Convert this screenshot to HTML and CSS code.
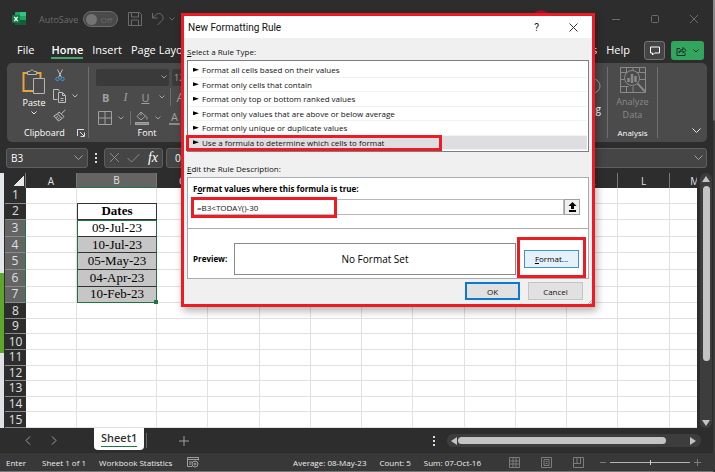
FILE: index.html
```
<!DOCTYPE html>
<html lang="en">

<head>
    <meta charset="UTF-8">
    <meta name="viewport" content="width=device-width, initial-scale=1.0">
    <title>New Formatting Rule</title>
    <link rel="stylesheet" href="styles.css">
</head>

<body>

    <div class="window">
        <header class="titlebar">
            <svg class="logo" width="14" height="14" viewBox="0 0 14 14">
                <g stroke="none">
                    <rect x="3" y="0" width="11" height="13" rx="1" fill="#21a366"/>
                    <rect x="8" y="0" width="6" height="4" fill="#33c481"/>
                    <rect x="3" y="8" width="11" height="5" rx="1" fill="#185c37"/>
                    <rect x="0" y="3" width="8" height="8" rx="1" fill="#107c41"/>
                </g>
                <path d="M2.3 4.8l3.4 4.4M5.7 4.8L2.3 9.2" stroke="#fff" stroke-width="1.3"/>
            </svg>
            <label class="autosave">AutoSave
                <span class="toggle"><input type="checkbox"><span>Off</span></span>
            </label>
            <button class="icon-btn save" aria-label="Save">
                <svg width="14" height="14" viewBox="0 0 14 14"><path d="M.5.5h11l2 2v11H.5zM3.5.5v4.5h7V.5M3.5 13.5V8h7v5.5"/></svg>
            </button>
            <button class="icon-btn undo" aria-label="Undo">
                <svg width="14" height="14" viewBox="0 0 14 14"><path d="M1.500 1v5h5M1.500 6l3-3c2-2 5-2 6.500 0s1.500 4 0 5.500L6.500 13"/></svg>
            </button>
            <svg width="6" height="4" viewBox="0 0 6 4"><path d="M.5.5L3 3 5.500.5"/></svg>
            <span class="avatar"></span>
            <div class="caption">
                <button class="icon-btn" aria-label="Minimize"><svg width="10" height="10" viewBox="0 0 10 10"><path d="M1 5.500h8"/></svg></button>
                <button class="icon-btn" aria-label="Maximize"><svg width="10" height="10" viewBox="0 0 10 10"><rect x="1.500" y="1.500" width="7" height="7" rx="1"/></svg></button>
                <button class="icon-btn" aria-label="Close"><svg width="10" height="10" viewBox="0 0 10 10"><path d="M1 1l8 8M9 1L1 9"/></svg></button>
            </div>
        </header>

        <nav class="tabs">
            <a href="#">File</a>
            <a href="#" class="active">Home</a>
            <a href="#">Insert</a>
            <a href="#">Page Layout</a>
            <a href="#" class="push">Add-ins</a>
            <a href="#">Help</a>
            <button class="comment" aria-label="Comments">
                <svg width="10" height="10" viewBox="0 0 10 10"><path d="M.5 1h9v6H4.500L2.500 9V7h-2z"/></svg>
            </button>
            <button class="share" aria-label="Share">
                <svg width="11" height="10" viewBox="0 0 11 10"><path d="M4 2.500H1v7h8V7M3 7c0-2.500 1.500-3.500 4-3.500V1.500l3 3-3 2.500V5C5 5 4 5.500 3 7z"/></svg>
                <svg width="6" height="4" viewBox="0 0 6 4"><path d="M.5.5L3 3 5.500.5"/></svg>
            </button>
        </nav>

        <section class="ribbon">
            <div class="group clipboard">
                <div class="group-body">
                    <button class="paste">
                        <svg width="24" height="26" viewBox="0 0 24 26">
                            <path d="M5 4H1.500v18H11M15 4h3.500v5" stroke="#e8a33d" stroke-width="2"/>
                            <path d="M5.500 5.500v-3h2.500c0-2 4-2 4 0h2.500v3zM11.500 9.500h11v15h-11z" fill="#4b4b4b" stroke="#b5b5b5"/>
                        </svg>
                        Paste
                        <svg class="light" width="6" height="4" viewBox="0 0 6 4"><path d="M.5.5L3 3 5.500.5"/></svg>
                    </button>
                    <div class="clip-tools">
                        <svg width="14" height="13" viewBox="0 0 14 13"><path d="M4.500.5l4 8M9.500.5l-4 8"/><circle cx="4.500" cy="10" r="1.700" stroke="#3d9be0"/><circle cx="9.500" cy="10" r="1.700" stroke="#3d9be0"/></svg>
                        <span class="copy">
                            <svg width="14" height="14" viewBox="0 0 14 14"><path d="M4.500 10.500h-4V.5h5l1 2M5.500 3.500h4l3 3v7h-7zM9.500 3.500v3h3M7.500 9.500h3M7.500 11.500h3"/></svg>
                            <svg class="light" width="6" height="4" viewBox="0 0 6 4"><path d="M.5.5L3 3 5.500.5"/></svg>
                        </span>
                        <svg width="14" height="13" viewBox="0 0 14 13"><path d="M12.500.8L8.500 4.500M6 3l5 4.500M6 3L4.500 5 9 9.500l2-2M4.500 5L.8 7l4.700 5L9 9.500M3 8.500l2-1M4.500 10.500l2-1.500"/></svg>
                    </div>
                </div>
                <div class="group-name">Clipboard
                    <svg class="launcher" width="8" height="8" viewBox="0 0 8 8"><path d="M.5 7V.5H7M3 3l4 4M7.500 3.500v4h-4"/></svg>
                </div>
            </div>
            <div class="group font">
                <div class="font-row">
                    <button class="combo" aria-label="Font"><svg width="6" height="4" viewBox="0 0 6 4"><path d="M.5.5L3 3 5.500.5"/></svg></button>
                    <button class="combo size" aria-label="Font size">12</button>
                </div>
                <div class="font-row styles">
                    <b>B</b><i>I</i><u>U</u>
                    <svg width="6" height="4" viewBox="0 0 6 4"><path d="M.5.5L3 3 5.500.5"/></svg>
                    <span class="grow">A</span>
                </div>
                <div class="font-row fills">
                    <svg width="14" height="14" viewBox="0 0 14 14"><path d="M.5.5h13v13H.5zM7 .5v13M.5 7h13"/></svg>
                    <svg width="6" height="4" viewBox="0 0 6 4"><path d="M.5.5L3 3 5.500.5"/></svg>
                    <span class="bucket">
                        <svg width="14" height="14" viewBox="0 0 14 14"><path d="M6 1L2 5.500l4 3.500 4.500-4zM6 1V4.500M10.500 5c1.500.5 1.500 1.500 1.500 3.500"/><rect x=".5" y="11.500" width="13" height="2" fill="#8a8a8a"/></svg>
                    </span>
                    <svg width="6" height="4" viewBox="0 0 6 4"><path d="M.5.5L3 3 5.500.5"/></svg>
                    <span class="fontcolor">A</span>
                </div>
                <div class="group-name">Font</div>
            </div>
            <div class="group editing">
                <svg width="16" height="16" viewBox="0 0 16 16"><circle cx="8" cy="8" r="7"/></svg>
                <span>Editing</span>
            </div>
            <div class="group analysis">
                <button class="analyze">
                    <svg width="26" height="26" viewBox="0 0 26 26">
                        <path d="M.5.5h25v25H.5zM.5 5.500h25M.5 12.500h6M.5 19.500h8M6.500.5v5M13 .5v4M19.500.5v5M19.500 12.500h6M6.500 19.500v6M13 19.500v6"/>
                        <circle cx="12" cy="11" r="7.500" fill="#4b4b4b"/>
                        <path d="M8.500 15v-4M12 16V7M15.500 15V9" stroke-width="2.500"/>
                        <path d="M17.500 16.500l7.500 8" stroke-width="2"/>
                    </svg>
                    Analyze<br>Data
                </button>
                <div class="group-name">Analysis</div>
            </div>
            <div class="group collapse">
                <svg class="light" width="9" height="5" viewBox="0 0 9 5"><path d="M.5.5l4 4 4-4"/></svg>
            </div>
        </section>

        <div class="formula-bar">
            <button class="namebox">B3 <svg width="9" height="5" viewBox="0 0 9 5"><path d="M.5.5l4 4 4-4"/></svg></button>
            <span class="dots"></span>
            <div class="fx-box">
                <svg width="11" height="11" viewBox="0 0 11 11"><path d="M1 1l9 9M10 1l-9 9"/></svg>
                <svg width="13" height="10" viewBox="0 0 13 10"><path d="M.5 5l4 4 8-8"/></svg>
                <i>fx</i>
            </div>
            <div class="formula">09-07-2023 <svg width="9" height="5" viewBox="0 0 9 5"><path d="M.5.5l4 4 4-4"/></svg></div>
        </div>

        <main class="sheet">
            <div class="edge"></div>
            <div class="grid-wrap">
                <table class="grid">
                    <thead>
                        <tr><th class="corner"></th><th class="col-a">A</th><th class="col-b sel">B</th><th>C</th><th>D</th><th>E</th><th>F</th><th>G</th><th>H</th><th>I</th><th>J</th><th>K</th><th>L</th><th>M</th></tr>
                    </thead>
                    <tbody>
                        <tr><th>1</th><td></td><td></td><td></td><td></td><td></td><td></td><td></td><td></td><td></td><td></td><td></td><td></td><td></td></tr>
                        <tr class="data"><th>2</th><td></td><td class="title">Dates</td><td></td><td></td><td></td><td></td><td></td><td></td><td></td><td></td><td></td><td></td><td></td></tr>
                        <tr class="data sel first"><th>3</th><td></td><td>09-Jul-23</td><td></td><td></td><td></td><td></td><td></td><td></td><td></td><td></td><td></td><td></td><td></td></tr>
                        <tr class="data sel"><th>4</th><td></td><td>10-Jul-23</td><td></td><td></td><td></td><td></td><td></td><td></td><td></td><td></td><td></td><td></td><td></td></tr>
                        <tr class="data sel"><th>5</th><td></td><td>05-May-23</td><td></td><td></td><td></td><td></td><td></td><td></td><td></td><td></td><td></td><td></td><td></td></tr>
                        <tr class="data sel"><th>6</th><td></td><td>04-Apr-23</td><td></td><td></td><td></td><td></td><td></td><td></td><td></td><td></td><td></td><td></td><td></td></tr>
                        <tr class="data sel last"><th>7</th><td></td><td>10-Feb-23</td><td></td><td></td><td></td><td></td><td></td><td></td><td></td><td></td><td></td><td></td><td></td></tr>
                        <tr><th>8</th><td></td><td></td><td></td><td></td><td></td><td></td><td></td><td></td><td></td><td></td><td></td><td></td><td></td></tr>
                        <tr><th>9</th><td></td><td></td><td></td><td></td><td></td><td></td><td></td><td></td><td></td><td></td><td></td><td></td><td></td></tr>
                        <tr><th>10</th><td></td><td></td><td></td><td></td><td></td><td></td><td></td><td></td><td></td><td></td><td></td><td></td><td></td></tr>
                        <tr><th>11</th><td></td><td></td><td></td><td></td><td></td><td></td><td></td><td></td><td></td><td></td><td></td><td></td><td></td></tr>
                        <tr><th>12</th><td></td><td></td><td></td><td></td><td></td><td></td><td></td><td></td><td></td><td></td><td></td><td></td><td></td></tr>
                        <tr><th>13</th><td></td><td></td><td></td><td></td><td></td><td></td><td></td><td></td><td></td><td></td><td></td><td></td><td></td></tr>
                        <tr><th>14</th><td></td><td></td><td></td><td></td><td></td><td></td><td></td><td></td><td></td><td></td><td></td><td></td><td></td></tr>
                        <tr><th>15</th><td></td><td></td><td></td><td></td><td></td><td></td><td></td><td></td><td></td><td></td><td></td><td></td><td></td></tr>
                    </tbody>
                </table>
            </div>
            <div class="vscroll">
                <svg width="8" height="6" viewBox="0 0 8 6"><path class="solid" d="M4 0l4 6H0z"/></svg>
                <span class="vthumb"></span>
                <svg class="down" width="8" height="6" viewBox="0 0 8 6"><path class="solid" d="M0 0h8L4 6z"/></svg>
            </div>
        </main>

        <div class="sheet-tabs">
            <svg width="6" height="9" viewBox="0 0 6 9"><path d="M5 .5l-4 4 4 4"/></svg>
            <svg width="6" height="9" viewBox="0 0 6 9"><path d="M1 .5l4 4-4 4"/></svg>
            <a href="#" class="sheet-tab"><span>Sheet1</span></a>
            <button class="add" aria-label="New sheet"><svg width="10" height="10" viewBox="0 0 10 10"><path d="M5 0v10M0 5h10"/></svg></button>
            <span class="dots"></span>
            <div class="hscroll">
                <svg width="6" height="8" viewBox="0 0 6 8"><path class="solid" d="M6 0v8L0 4z"/></svg>
                <span class="hthumb"></span>
                <svg width="6" height="8" viewBox="0 0 6 8"><path class="solid" d="M0 0l6 4-6 4z"/></svg>
            </div>
        </div>

        <footer class="status">
            <span class="mode">Enter</span>
            <span class="count">Sheet 1 of 1</span>
            <span>Workbook Statistics</span>
            <svg class="macro" width="12" height="11" viewBox="0 0 12 11"><path d="M.5.5h11v3M.5.5v9H5M.5 2.500h11M2 5h3M2 7h2"/><circle cx="8" cy="7" r="3"/><circle cx="8" cy="7" r="1"/></svg>
            <div class="totals"><span>Average: 08-May-23</span><span>Count: 5</span><span>Sum: 07-Oct-16</span></div>
            <div class="views">
                <svg width="11" height="11" viewBox="0 0 11 11"><path d="M.5.5h10v10H.5zM.5 4h10M.5 7h10M4 .5v10M7 .5v10"/></svg>
                <svg width="11" height="11" viewBox="0 0 11 11"><path d="M.5.5h10v10H.5zM3 2.500h5v6H3zM4.500 4.500h2M4.500 6.500h2"/></svg>
                <svg width="11" height="11" viewBox="0 0 11 11"><path d="M.5.5h10v10H.5zM4 .5v6M7.500.5v6M.5 6.500h7"/></svg>
            </div>
            <div class="zoom">
                <svg width="6" height="7" viewBox="0 0 6 7"><path d="M0 3.500h6"/></svg>
                <input type="range" aria-label="Zoom" value="50">
                <svg width="7" height="7" viewBox="0 0 7 7"><path d="M0 3.500h7M3.500 0v7"/></svg>
            </div>
        </footer>

        <div class="dialog" role="dialog" aria-labelledby="dialog-title">
            <div class="dialog-head">
                <span id="dialog-title">New Formatting Rule</span>
                <button aria-label="Help">?</button>
                <button aria-label="Close"><svg width="9" height="9" viewBox="0 0 9 9"><path d="M.5.5l8 8M8.500.5l-8 8"/></svg></button>
            </div>
            <div class="dialog-body">
                <div class="caption-text" id="rule-type"><u>S</u>elect a Rule Type:</div>
                <ul class="rules" role="listbox" aria-labelledby="rule-type">
                    <li role="option">Format all cells based on their values</li>
                    <li role="option">Format only cells that contain</li>
                    <li role="option">Format only top or bottom ranked values</li>
                    <li role="option">Format only values that are above or below average</li>
                    <li role="option">Format only unique or duplicate values</li>
                    <li role="option" class="picked" aria-selected="true">Use a formula to determine which cells to format</li>
                </ul>
                <div class="caption-text"><u>E</u>dit the Rule Description:</div>
                <div class="description">
                    <div class="formula-part">
                        <label for="rule-formula">F<u>o</u>rmat values where this formula is true:</label>
                        <div class="formula-row">
                            <input type="text" id="rule-formula" value="=B3&lt;TODAY()-30">
                            <button aria-label="Collapse"><svg width="9" height="10" viewBox="0 0 9 10"><path class="arrow" d="M4.500 0l4 4H6v3H3V4H.5zM1 8h7v2H1z"/></svg></button>
                        </div>
                    </div>
                    <div class="preview-part">
                        <b>Preview:</b>
                        <div class="preview">No Format Set</div>
                        <button class="btn hot"><span><u>F</u>ormat...</span></button>
                    </div>
                </div>
                <div class="actions">
                    <button class="btn ok">OK</button>
                    <button class="btn">Cancel</button>
                </div>
            </div>
        </div>
    </div>

    <script>
        // put the caret at the end of the formula
        const formula = document.getElementById("rule-formula");
        formula.focus();
        formula.setSelectionRange(formula.value.length, formula.value.length);
    </script>

</body>

</html>
```
FILE: styles.css
```
* {
    box-sizing: border-box;
}

body {
    margin: 0;
    font-family: "Open Sans", "Noto Sans", sans-serif;
    font-size: 11px;
    color: #fff;
    background: linear-gradient(#8c8c8c, #6a6a6a 120px, #3a3a3a 121px);
}

button, input {
    font: inherit;
    color: inherit;
    margin: 0;
    padding: 0;
    border: 0;
    background: none;
}

button {
    display: flex;
    align-items: center;
    justify-content: center;
}

a {
    color: inherit;
    text-decoration: none;
}

svg {
    flex: none;
    fill: none;
    stroke: #a0a0a0;
}

.light {
    stroke: #e8e8e8;
}

.solid {
    fill: #c4c4c4;
    stroke: none;
}

.window {
    position: relative;
    display: flex;
    flex-direction: column;
    height: 100vh;
    margin-right: 2px;
    overflow: hidden;
    background: #2d2d2d;
    border-bottom: 1px solid #777;
}

/* title bar */
.titlebar {
    display: flex;
    align-items: center;
    height: 38px;
    padding-left: 12px;
}

.titlebar svg {
    stroke: #6c6c6c;
}

.autosave {
    display: flex;
    align-items: center;
    gap: 5px;
    margin-left: 13px;
    font-size: 9px;
    color: #6c6c6c;
}

.toggle {
    display: flex;
    align-items: center;
    width: 35px;
    height: 16px;
    padding: 0 5px 0 2px;
    justify-content: space-between;
    font-size: 8px;
    border: 1px solid #6c6c6c;
    border-radius: 8px;
    background: #4a4a4a;
}

.toggle input {
    appearance: none;
    width: 11px;
    height: 11px;
    border-radius: 50%;
    background: #747474;
}

.save {
    margin-left: 10px;
}

.undo {
    margin: 0 4px 0 9px;
}

.avatar {
    width: 18px;
    height: 18px;
    margin-left: auto;
    border-radius: 50%;
    background: #9a1230;
}

.caption {
    display: flex;
    gap: 29px;
    margin: 0 14px 0 61px;
}

/* ribbon */
.tabs {
    display: flex;
    align-items: center;
    height: 25px;
    gap: 9px;
    padding: 0 9px 0 17px;
}

.tabs a {
    border-bottom: 2px solid transparent;
    white-space: nowrap;
}

.tabs .active {
    margin-left: 8px;
    font-weight: 600;
    border-color: #41a86a;
}

.tabs .push {
    margin-left: auto;
}

.comment, .share {
    height: 19px;
    border-radius: 3px;
}

.comment {
    width: 21px;
    margin-left: 5px;
    border: 1px solid #747474;
    background: #444;
}

.comment svg {
    stroke: #fff;
}

.share {
    width: 33px;
    gap: 6px;
    margin-left: -3px;
    background: #33a55f;
}

.share svg {
    stroke: #12331f;
}

.ribbon {
    display: flex;
    height: 79px;
    margin: 0 6px 0 7px;
    padding: 4px 0;
    border-radius: 5px;
    background: #4b4b4b;
}

.group {
    display: flex;
    flex-direction: column;
    border-right: 1px solid #707070;
}

.group-name {
    margin-top: auto;
    font-size: 9px;
    line-height: 10px;
    text-align: center;
}

.clipboard {
    width: 82px;
}

.clipboard .group-name {
    display: flex;
    align-items: center;
    justify-content: space-between;
    padding: 0 3px 0 17px;
}

.launcher {
    stroke: #ddd;
}

.group-body {
    display: flex;
    gap: 7px;
    padding-left: 15px;
}

.paste {
    flex-direction: column;
    justify-content: flex-start;
    gap: 2px;
    padding-top: 2px;
    font-size: 9px;
    line-height: 12px;
}

.clip-tools {
    display: flex;
    flex-direction: column;
    justify-content: space-between;
    height: 55px;
    padding-top: 2px;
}

.clip-tools svg {
    stroke: #bdbdbd;
}

.copy {
    display: flex;
    align-items: center;
    gap: 5px;
}

.font {
    width: 109px;
    padding-left: 7px;
    border: 0;
    color: #a0a0a0;
}

.font .group-name {
    color: #fff;
}

.font-row {
    display: flex;
    align-items: center;
    height: 21px;
}

.combo {
    flex: none;
    width: 73px;
    height: 17px;
    margin-right: 3px;
    justify-content: flex-end;
    padding-right: 2px;
    border-radius: 2px;
    background: #3a3a3a;
}

.combo.size {
    width: 30px;
    justify-content: flex-start;
    padding-left: 2px;
    font-size: 9px;
}

.styles {
    gap: 14px;
    padding-left: 6px;
}

.styles svg {
    margin-left: -4px;
}

.styles i {
    font-family: "Liberation Serif", serif;
    font-size: 12px;
}

.grow {
    padding-left: 5px;
    margin-left: -9px;
    font-size: 13px;
    border-left: 1px solid #707070;
}

.fills {
    gap: 6px;
    padding-left: 2px;
}

.bucket {
    display: flex;
    padding-left: 4px;
    border-left: 1px solid #707070;
}

.fontcolor {
    padding: 0 2px;
    margin-left: 2px;
    line-height: 12px;
    border-bottom: 2px solid #8a8a8a;
}

.editing {
    align-items: flex-end;
    justify-content: center;
    gap: 8px;
    margin-left: auto;
    padding: 0 6px 12px 0;
    font-size: 10px;
}

.analysis {
    width: 50px;
}

.analysis .group-name {
    font-size: 8px;
}

.analyze {
    flex-direction: column;
    font-size: 9px;
    line-height: 13px;
    color: #8a8a8a;
}

.analyze svg {
    margin-bottom: 2px;
    stroke: #8a8a8a;
}

.collapse {
    width: 49px;
    align-items: center;
    justify-content: flex-end;
    padding: 0 0 5px 27px;
    border: 0;
}

/* formula bar */
.formula-bar {
    display: flex;
    align-items: center;
    gap: 3px;
    height: 31px;
    padding: 0 6px;
    font-size: 10px;
}

.namebox, .fx-box, .formula {
    display: flex;
    align-items: center;
    justify-content: space-between;
    height: 20px;
    border: 1px solid #5e5e5e;
    border-radius: 3px;
    background: #454545;
}

.namebox {
    width: 82px;
    padding: 0 4px;
}

.dots {
    width: 2px;
    height: 10px;
    margin: 0 4px 0 4px;
    background: repeating-linear-gradient(#ddd 0 2px, transparent 2px 4px);
}

.fx-box {
    width: 59px;
    padding: 0 4px;
}

.fx-box svg {
    stroke: #8a8a8a;
}

.fx-box i {
    font-family: "Liberation Serif", serif;
    font-size: 14px;
}

.formula {
    flex: 1;
    padding: 0 3px 0 8px;
}

/* worksheet */
.sheet {
    display: flex;
    flex: 1;
    min-height: 0;
}

.edge {
    width: 5px;
    border-right: 1px solid #2d2d2d;
    background: linear-gradient(#e4e7e9 100px, #5fa62c 100px 180px, #dfe3e6 180px);
}

.grid-wrap {
    flex: 1;
    min-width: 0;
    overflow: hidden;
    background: #fff;
}

.grid {
    width: calc(100% + 24px);
    height: 100%;
    table-layout: fixed;
    border-spacing: 0;
    font-family: "Liberation Serif", serif;
    font-size: 13px;
    line-height: 14px;
    color: #000;
}

.grid th {
    padding: 0;
    font-family: "Open Sans", sans-serif;
    font-size: 10px;
    font-weight: normal;
    color: #e0e0e0;
    background: #2d2d2d;
}

.grid thead th {
    height: 15px;
    border-right: 1px solid #777;
}

.grid tbody th {
    font-size: 12px;
    border-bottom: 1px solid #8a8a8a;
}

.grid td {
    height: 15px;
    padding: 0;
    text-align: center;
    border-right: 1px solid #e1e1e1;
    border-bottom: 1px solid #e1e1e1;
}

.grid .data td {
    height: 16px;
}

.grid .corner {
    width: 21px;
    background: #2d2d2d linear-gradient(135deg, #2d2d2d 50%, #e8e8e8 50%) no-repeat right 1px bottom 2px / 11px 11px;
}

.grid thead .col-a {
    width: 51px;
}

.grid thead .col-b {
    width: 80px;
    border-bottom: 1px solid #217346;
}

.grid .sel th, .grid th.sel {
    background: #646464;
}

.grid .sel th {
    border-right: 1px solid #217346;
}

.data td:nth-child(3) {
    border: 1px solid #333;
    border-top: 0;
    position: relative;
}

.data .title {
    font-weight: bold;
    box-shadow: 0 -1px #333;
}

.grid .sel td:nth-child(3) {
    border-left: 1px solid #217346;
    border-right: 1px solid #217346;
    background: #c6c6c6;
}

.grid .first td:nth-child(3) {
    border-top: 1px solid #217346;
    background: #fff;
}

.grid .last td:nth-child(3) {
    border-bottom: 1px solid #217346;
}

.last td:nth-child(3)::after {
    content: "";
    position: absolute;
    right: -2px;
    bottom: -2px;
    width: 4px;
    height: 4px;
    background: #217346;
}

.vscroll {
    display: flex;
    flex-direction: column;
    align-items: center;
    width: 12px;
    margin: 0 1px 0 3px;
    padding: 3px 0 2px;
    border-radius: 6px;
    background: #3d3d3d;
}

.vthumb {
    width: 7px;
    height: 175px;
    margin-top: 4px;
    border-radius: 4px;
    background: #c4c4c4;
}

.down {
    margin-top: auto;
}

.sheet-tabs {
    display: flex;
    align-items: center;
    height: 25px;
    padding: 0 12px 0 25px;
    gap: 20px;
}

.sheet-tab {
    align-self: flex-start;
    height: 22px;
    margin-left: 17px;
    padding: 2px 7px;
    font-size: 11px;
    line-height: 16px;
    font-weight: 600;
    color: #333;
    border-radius: 0 0 4px 4px;
    background: #fff;
}

.sheet-tab span {
    display: block;
    border-bottom: 1px solid #217346;
}

.add {
    height: 15px;
    margin-left: -18px;
    padding-left: 32px;
    border-left: 1px solid #666;
}

.sheet-tabs .dots {
    margin: 0 -8px 0 auto;
}

.hscroll {
    display: flex;
    align-items: center;
    justify-content: space-between;
    width: 254px;
    height: 13px;
    padding: 0 5px 0 4px;
    border-radius: 6px;
    background: #3d3d3d;
}

.hthumb {
    width: 208px;
    height: 7px;
    margin: 0 18px 0 -5px;
    border-radius: 4px;
    background: #c4c4c4;
}

.status {
    display: flex;
    align-items: center;
    height: 18px;
    padding: 0 12px 0 6px;
    font-size: 8px;
    color: #eee;
    background: #383838;
}

.mode {
    width: 36px;
}

.count {
    width: 57px;
}

.macro {
    margin-left: 15px;
}

.totals {
    display: flex;
    gap: 13px;
    margin-left: auto;
}

.views {
    display: flex;
    gap: 21px;
    margin: 0 16px 0 28px;
}

.views svg, .zoom svg {
    stroke: #7c7c7c;
}

.zoom {
    display: flex;
    align-items: center;
    gap: 4px;
}

.zoom input {
    appearance: none;
    width: 80px;
    height: 1px;
    background: #b5b5b5;
}

.zoom input::-webkit-slider-thumb {
    appearance: none;
    width: 1px;
    height: 5px;
    background: #d0d0d0;
}

/* dialog */
.dialog {
    position: absolute;
    top: 13px;
    left: 181px;
    width: 414px;
    font-family: "Open Sans", sans-serif;
    font-size: 8px;
    color: #111;
    border: 3px solid #ed1c24;
    background: #f0f0f0;
    box-shadow: 2px 4px 8px rgba(0, 0, 0, 0.3);
}

/* resize grip */
.dialog::after {
    content: "";
    position: absolute;
    right: 0;
    bottom: 0;
    width: 6px;
    height: 6px;
    background: repeating-linear-gradient(135deg, transparent 0 1px, #b5b5b5 1px 2px);
    clip-path: polygon(100% 0, 100% 100%, 0 100%);
}

.dialog-head {
    display: flex;
    align-items: center;
    gap: 30px;
    height: 22px;
    padding: 0 14px 0 4px;
    font-family: Roboto, sans-serif;
    font-size: 10px;
    background: #fff;
}

.dialog-head span {
    margin-right: auto;
}

.dialog-head svg {
    stroke: #333;
}

.dialog-body {
    padding: 7px 3px 4px;
}

.caption-text {
    height: 15px;
    line-height: 14px;
}

.rules {
    display: flex;
    flex-direction: column;
    height: 92px;
    margin: 0 0 10px;
    padding: 2px 1px 1px;
    list-style: none;
    border: 1px solid #7a7d84;
    background: #fff;
}

.rules li {
    display: flex;
    flex: 1;
    align-items: center;
    padding-left: 4px;
    border-bottom: 1px solid #f2f2f2;
}

.rules li::before {
    content: "";
    width: 6px;
    height: 4px;
    margin-right: 3px;
    background: #000;
    clip-path: polygon(0 0, 100% 50%, 0 100%);
}

.rules .picked {
    position: relative;
    background: #dedee2;
}

/* red marker frames around the highlighted controls */
.picked::after, .formula-row::before, .hot::after {
    content: "";
    position: absolute;
    border: 3px solid #ed1c24;
    pointer-events: none;
}

.picked::after {
    inset: -1px 145px -2px -3px;
}

.description {
    border: 1px solid #a8abb0;
    background: #fff;
}

.formula-part {
    height: 51px;
    padding: 4px 8px 0 5px;
    border-bottom: 1px solid #a8abb0;
}

.formula-part label {
    display: block;
    height: 17px;
    line-height: 14px;
    font-weight: bold;
    color: #000;
}

.formula-row {
    position: relative;
    display: flex;
}

.formula-row::before {
    inset: -2px 243px -3px -2px;
}

.formula-row input {
    flex: 1;
    height: 16px;
    padding-left: 3px;
    border: 1px solid #b8b8b8;
    outline: 0;
}

.formula-row button {
    width: 16px;
    border: 1px solid #a0a0a0;
    background: #f0f0f0;
}

.arrow {
    fill: #000;
    stroke: none;
}

.preview-part {
    display: flex;
    align-items: center;
    height: 49px;
    padding: 10px 9px 0 5px;
    color: #000;
}

.preview-part b {
    width: 41px;
}

.preview {
    flex: 1;
    margin-right: 8px;
    font-size: 10px;
    line-height: 30px;
    text-align: center;
    border: 1px solid #8a8a8a;
}

.btn {
    position: relative;
    width: 55px;
    height: 18px;
    border: 1px solid #c4c4c4;
    background: #e1e1e1;
}

.hot {
    border-color: #3c93dd;
    background: #e5f1fb;
}

.hot::after {
    inset: -14px -8px -11px;
}

.ok {
    border: 2px solid #0b78d4;
}

.actions {
    display: flex;
    justify-content: flex-end;
    gap: 8px;
    padding: 3px 6px 0 0;
}
```
